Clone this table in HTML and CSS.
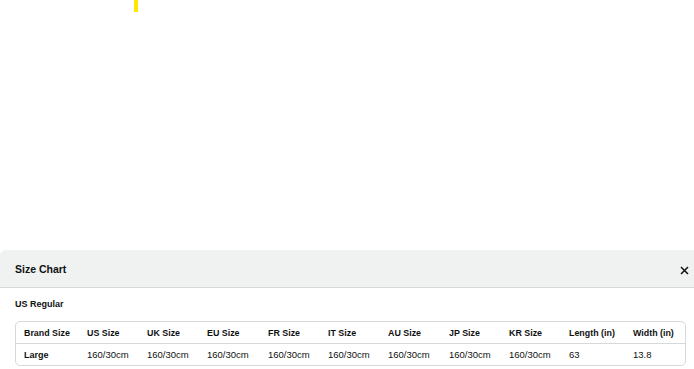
FILE: index.html
```html
<!DOCTYPE html>
<html>
<head>
<meta charset="utf-8">
<link rel="stylesheet" href="styles.css">
</head>
<body>
<div class="top">
  <div class="marker"></div>
</div>
<section class="panel">
  <header class="panel-head">
    <h2 class="title">Size Chart</h2>
    <button class="close" aria-label="Close">
      <svg width="9" height="9" viewBox="0 0 9 9"><path d="M1 1L8 8M8 1L1 8" stroke="#0f1111" stroke-width="1.5" fill="none"/></svg>
    </button>
  </header>
  <div class="panel-body">
    <div class="subtitle">US Regular</div>
    <div class="chart">
      <div class="row head">
        <div>Brand Size</div><div>US Size</div><div>UK Size</div><div>EU Size</div><div>FR Size</div><div>IT Size</div><div>AU Size</div><div>JP Size</div><div>KR Size</div><div>Length (in)</div><div>Width (in)</div>
      </div>
      <div class="row">
        <div class="b">Large</div><div>160/30cm</div><div>160/30cm</div><div>160/30cm</div><div>160/30cm</div><div>160/30cm</div><div>160/30cm</div><div>160/30cm</div><div>160/30cm</div><div>63</div><div>13.8</div>
      </div>
    </div>
  </div>
</section>
</body>
</html>
```
FILE: styles.css
```css
html, body {
  margin: 0;
  padding: 0;
  background: #fff;
  font-family: "Liberation Sans", Arial, sans-serif;
  color: #0f1111;
}
.top {
  height: 250px;
}
.marker {
  margin-left: 134px;
  width: 4px;
  height: 12px;
  background: #ffe600;
}
.panel-head {
  height: 37px;
  background: #f0f2f2;
  border-bottom: 1px solid #d5d9d9;
  border-top-left-radius: 6px;
  display: flex;
  align-items: center;
  justify-content: space-between;
  padding: 0 5px 0 15px;
}
.title {
  margin: 0;
  font-size: 10.5px;
  font-weight: bold;
}
.close {
  border: 0;
  background: none;
  padding: 0;
  margin-top: 3px;
  width: 9px;
  height: 9px;
  display: flex;
}
.panel-body {
  padding: 0 8px 0 15px;
}
.subtitle {
  margin-top: 10px;
  line-height: 12px;
  font-size: 9px;
  font-weight: bold;
}
.chart {
  margin-top: 11px;
  width: 669px;
  border: 1px solid #d5d9d9;
  border-radius: 5px;
}
.row {
  display: grid;
  grid-template-columns: 63px 60px 60px 61px 60px 60px 61px 60px 60px 64px 60px;
  height: 21px;
  align-items: center;
  font-size: 9.5px;
}
.row > div {
  padding-left: 8px;
  white-space: nowrap;
}
.row.head {
  border-bottom: 1px solid #d5d9d9;
  font-weight: bold;
  font-size: 8.9px;
}
.row .b {
  font-weight: bold;
  font-size: 9px;
}
```
